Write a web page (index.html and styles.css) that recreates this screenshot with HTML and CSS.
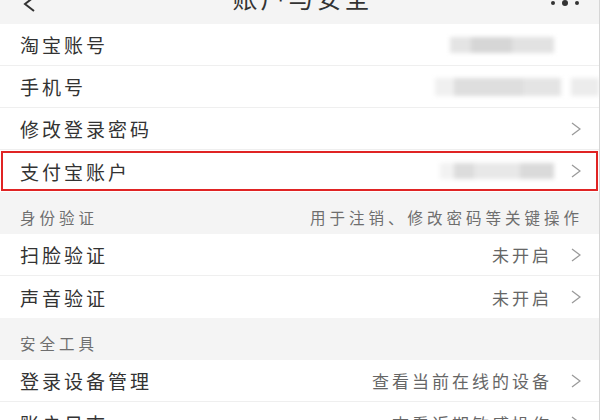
FILE: index.html
```html
<!DOCTYPE html>
<html lang="zh-CN">
<head>
    <meta charset="UTF-8">
    <title>账户与安全</title>
    <meta name="viewport" content="width=device-width, initial-scale=1.0">
    <link rel="stylesheet" href="styles.css">
</head>
<body>

<!-- Top bar, scrolled half out of view -->
<header class="topbar">
    <span class="back">
        <svg width="12" height="16" viewBox="0 0 12 16"><path d="M11 1 L2 8 L11 15" fill="none" stroke="#333" stroke-width="2"/></svg>
    </span>
    <h1>账户与安全</h1>
    <span class="more">
        <svg width="30" height="8" viewBox="0 0 30 8"><circle cx="3" cy="4" r="2" fill="#333"/><circle cx="15" cy="4" r="3" fill="#333"/><circle cx="27" cy="4" r="2" fill="#333"/></svg>
    </span>
</header>

<div class="list">
    <div class="row">
        <span class="label">淘宝账号</span>
        <span class="blur blur-a"></span>
    </div>
    <div class="row">
        <span class="label">手机号</span>
        <span class="blur blur-b"></span>
        <span class="blur blur-c"></span>
    </div>
    <div class="row">
        <span class="label">修改登录密码</span>
        <span class="arrow"><svg width="10" height="14" viewBox="0 0 10 14"><path d="M1 1 L9 7 L1 13" fill="none" stroke="#9a9a9a" stroke-width="1.3"/></svg></span>
    </div>
    <div class="row marked">
        <span class="label">支付宝账户</span>
        <span class="blur blur-d"></span>
        <span class="arrow"><svg width="10" height="14" viewBox="0 0 10 14"><path d="M1 1 L9 7 L1 13" fill="none" stroke="#9a9a9a" stroke-width="1.3"/></svg></span>
    </div>
</div>

<div class="section">
    <span>身份验证</span>
    <span>用于注销、修改密码等关键操作</span>
</div>

<div class="list">
    <div class="row">
        <span class="label">扫脸验证</span>
        <span class="value">未开启</span>
        <span class="arrow"><svg width="10" height="14" viewBox="0 0 10 14"><path d="M1 1 L9 7 L1 13" fill="none" stroke="#9a9a9a" stroke-width="1.3"/></svg></span>
    </div>
    <div class="row">
        <span class="label">声音验证</span>
        <span class="value">未开启</span>
        <span class="arrow"><svg width="10" height="14" viewBox="0 0 10 14"><path d="M1 1 L9 7 L1 13" fill="none" stroke="#9a9a9a" stroke-width="1.3"/></svg></span>
    </div>
</div>

<div class="section">
    <span>安全工具</span>
</div>

<div class="list">
    <div class="row">
        <span class="label">登录设备管理</span>
        <span class="value">查看当前在线的设备</span>
        <span class="arrow"><svg width="10" height="14" viewBox="0 0 10 14"><path d="M1 1 L9 7 L1 13" fill="none" stroke="#9a9a9a" stroke-width="1.3"/></svg></span>
    </div>
    <div class="row">
        <span class="label">账户日志</span>
        <span class="value">查看近期敏感操作</span>
        <span class="arrow"><svg width="10" height="14" viewBox="0 0 10 14"><path d="M1 1 L9 7 L1 13" fill="none" stroke="#9a9a9a" stroke-width="1.3"/></svg></span>
    </div>
</div>

</body>
</html>
```

FILE: styles.css
```css
* {
    box-sizing: border-box;
}

body {
    margin: 0;
    width: 600px;
    height: 420px;
    overflow: hidden;
    background-color: #f4f4f4;
    border-right: 1px solid #d6d6d6;
    font-family: "Noto Sans CJK SC", "Noto Sans", sans-serif;
    color: #333;
}

.topbar {
    height: 48px;
    margin-top: -24px;
    display: flex;
    align-items: center;
    justify-content: space-between;
    padding: 0 19px 0 23px;
    background-color: #f4f4f4;
}

.topbar h1 {
    margin: 0 0 6px 0;
    padding-left: 20px;
    font-size: 25px;
    font-weight: 400;
    letter-spacing: 3px;
    color: #333;
}

.back,
.more {
    display: flex;
    align-items: center;
    margin-top: 8px;
}

.more {
    margin-top: 6px;
}

.list {
    background-color: #fff;
}

.row {
    height: 42px;
    display: flex;
    align-items: center;
    padding: 0 18px 0 20px;
    border-bottom: 1px solid #efefef;
}

.row:last-child {
    border-bottom: none;
}

.row.marked {
    outline: 2px solid #e02424;
    outline-offset: -3px;
}

.label {
    flex: 1;
    font-size: 19px;
    letter-spacing: 3px;
}

.value {
    font-size: 17px;
    letter-spacing: 3px;
    color: #666;
}

.arrow {
    display: flex;
    margin-left: 19px;
}

/* blurred private values */
.blur {
    display: block;
    height: 16px;
    filter: blur(2px);
}

.blur-a {
    width: 104px;
    margin-right: 27px;
    background: linear-gradient(90deg, #e4e4e4 0 20%, #d6d6d6 20% 60%, #e2e2e2 60% 100%);
}

.blur-b {
    width: 126px;
    height: 18px;
    margin-right: 10px;
    background: linear-gradient(90deg, #f0f0f0 0 15%, #dedede 15% 70%, #e4e4e4 70% 100%);
}

.blur-c {
    width: 28px;
    height: 18px;
    margin-right: -18px;
    background: #ececec;
}

.blur-d {
    width: 114px;
    margin-right: -2px;
    background: linear-gradient(90deg, #f2f2f2 0 12%, #dcdcdc 12% 30%, #e8e8e8 30% 70%, #dadada 70% 100%);
}

.section {
    height: 42px;
    display: flex;
    align-items: flex-end;
    justify-content: space-between;
    padding: 0 20px 6px 20px;
    font-size: 15.5px;
    letter-spacing: 4px;
    color: #6e6e6e;
}

.section span:last-child {
    margin-right: -4px;
}
```
